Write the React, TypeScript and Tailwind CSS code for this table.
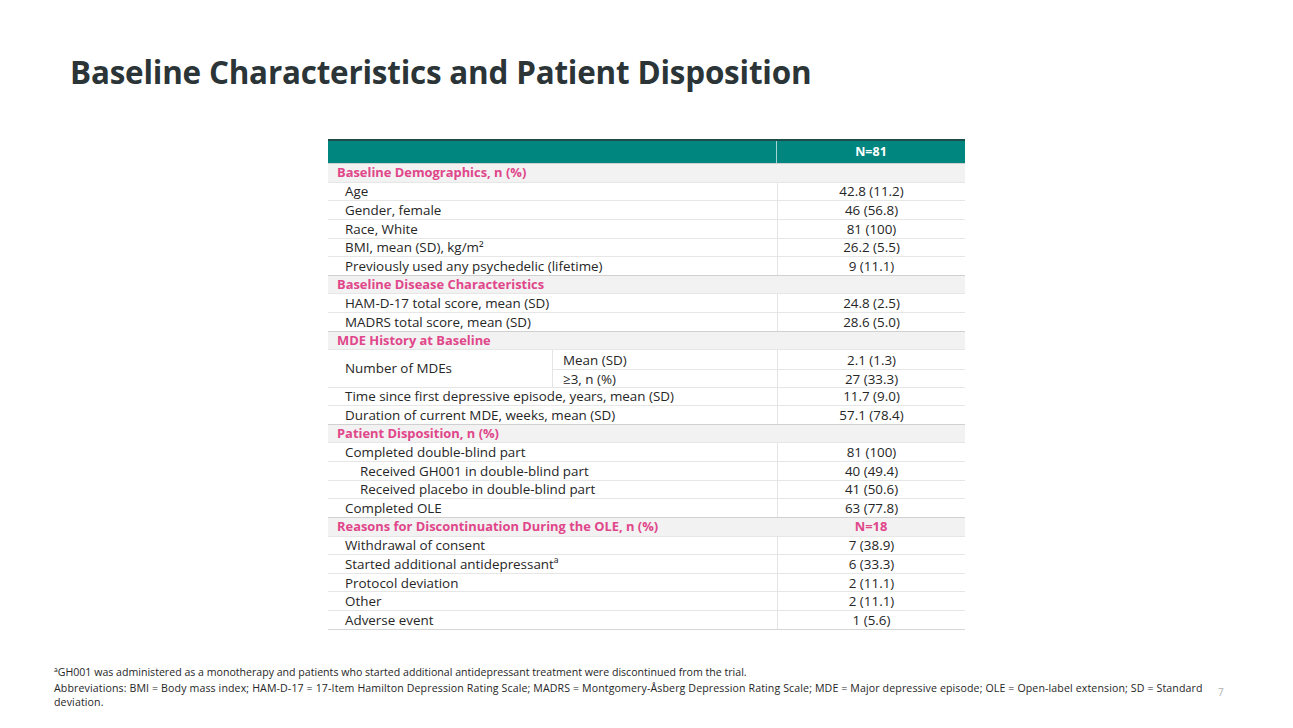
const rows: Array<
  | { kind: 'section'; label: string; value?: string }
  | { kind: 'row'; label: string; value: string; indent?: boolean }
  | { kind: 'split'; label: string; items: [string, string][] }
> = [
  { kind: 'section', label: 'Baseline Demographics, n (%)' },
  { kind: 'row', label: 'Age', value: '42.8 (11.2)' },
  { kind: 'row', label: 'Gender, female', value: '46 (56.8)' },
  { kind: 'row', label: 'Race, White', value: '81 (100)' },
  { kind: 'row', label: 'BMI, mean (SD), kg/m²', value: '26.2 (5.5)' },
  { kind: 'row', label: 'Previously used any psychedelic (lifetime)', value: '9 (11.1)' },
  { kind: 'section', label: 'Baseline Disease Characteristics' },
  { kind: 'row', label: 'HAM-D-17 total score, mean (SD)', value: '24.8 (2.5)' },
  { kind: 'row', label: 'MADRS total score, mean (SD)', value: '28.6 (5.0)' },
  { kind: 'section', label: 'MDE History at Baseline' },
  {
    kind: 'split',
    label: 'Number of MDEs',
    items: [
      ['Mean (SD)', '2.1 (1.3)'],
      ['≥3, n (%)', '27 (33.3)'],
    ],
  },
  { kind: 'row', label: 'Time since first depressive episode, years, mean (SD)', value: '11.7 (9.0)' },
  { kind: 'row', label: 'Duration of current MDE, weeks, mean (SD)', value: '57.1 (78.4)' },
  { kind: 'section', label: 'Patient Disposition, n (%)' },
  { kind: 'row', label: 'Completed double-blind part', value: '81 (100)' },
  { kind: 'row', label: 'Received GH001 in double-blind part', value: '40 (49.4)', indent: true },
  { kind: 'row', label: 'Received placebo in double-blind part', value: '41 (50.6)', indent: true },
  { kind: 'row', label: 'Completed OLE', value: '63 (77.8)' },
  { kind: 'section', label: 'Reasons for Discontinuation During the OLE, n (%)', value: 'N=18' },
  { kind: 'row', label: 'Withdrawal of consent', value: '7 (38.9)' },
  { kind: 'row', label: 'Started additional antidepressantª', value: '6 (33.3)' },
  { kind: 'row', label: 'Protocol deviation', value: '2 (11.1)' },
  { kind: 'row', label: 'Other', value: '2 (11.1)' },
  { kind: 'row', label: 'Adverse event', value: '1 (5.6)' },
];

export default function App() {
  return (
    <div
      className="relative w-[1293px] h-[728px] bg-white text-[#262626] overflow-hidden"
      style={{ fontFamily: '"Open Sans", "Liberation Sans", sans-serif' }}
    >
      <div className="pl-[70px] pt-[51px]">
        <h1 className="text-[31.4px] leading-[42px] font-bold text-[#2b3436] tracking-[-0.2px]">
          Baseline Characteristics and Patient Disposition
        </h1>
      </div>

      <div className="ml-[328px] mt-[46px] w-[637px] text-[13.4px]">
        {/* header */}
        <div className="flex h-[24px] bg-[#00857f] border-t-2 border-[#1e4d4b]">
          <div className="w-[449px] border-r border-[#a8d4d1]" />
          <div className="flex-1 flex items-center justify-center text-white font-bold text-[12.5px]">N=81</div>
        </div>

        {rows.map((r, i) => {
          if (r.kind === 'section') {
            return (
              <div
                key={i}
                className="flex h-[18.64px] bg-[#f2f2f2] border-t border-[#d0d0d0] font-bold text-[#e0468a] text-[12.9px]"
              >
                <div className="w-[449px] pl-[9px] flex items-center whitespace-nowrap">{r.label}</div>
                <div className="flex-1 flex items-center justify-center">{r.value ?? ''}</div>
              </div>
            );
          }
          if (r.kind === 'split') {
            return (
              <div key={i} className="flex h-[37.28px] border-t border-[#e6e6e6]">
                <div className="w-[224px] pl-[17px] flex items-center">{r.label}</div>
                <div className="flex-1 flex flex-col">
                  {r.items.map(([sub, val], j) => (
                    <div
                      key={j}
                      className={`flex h-[18.64px] ${j > 0 ? 'border-t border-[#e6e6e6]' : ''}`}
                    >
                      <div className="w-[225px] pl-[10px] flex items-center border-l border-[#e4e4e4]">{sub}</div>
                      <div className="flex-1 flex items-center justify-center border-l border-[#e4e4e4]">{val}</div>
                    </div>
                  ))}
                </div>
              </div>
            );
          }
          return (
            <div key={i} className="flex h-[18.64px] border-t border-[#e6e6e6]">
              <div
                className={`w-[449px] flex items-center whitespace-nowrap ${r.indent ? 'pl-[32px]' : 'pl-[17px]'}`}
              >
                {r.label}
              </div>
              <div className="flex-1 flex items-center justify-center border-l border-[#e4e4e4]">{r.value}</div>
            </div>
          );
        })}
        <div className="border-t border-[#d6d6d6]" />
      </div>

      <div className="absolute left-[54px] top-[665px] w-[1150px] text-[10.6px] leading-[14px] text-[#262626]">
        <p className="mb-[2px]">
          ªGH001 was administered as a monotherapy and patients who started additional antidepressant treatment were
          discontinued from the trial.
        </p>
        <p className="tracking-[0.12px]">
          Abbreviations: BMI = Body mass index; HAM-D-17 = 17-Item Hamilton Depression Rating Scale; MADRS =
          Montgomery-Åsberg Depression Rating Scale; MDE = Major depressive episode; OLE = Open-label extension; SD =
          Standard deviation.
        </p>
      </div>
      <div className="absolute left-[1218px] top-[685px] text-[10px] text-[#b0b0b0]">7</div>
    </div>
  );
}
